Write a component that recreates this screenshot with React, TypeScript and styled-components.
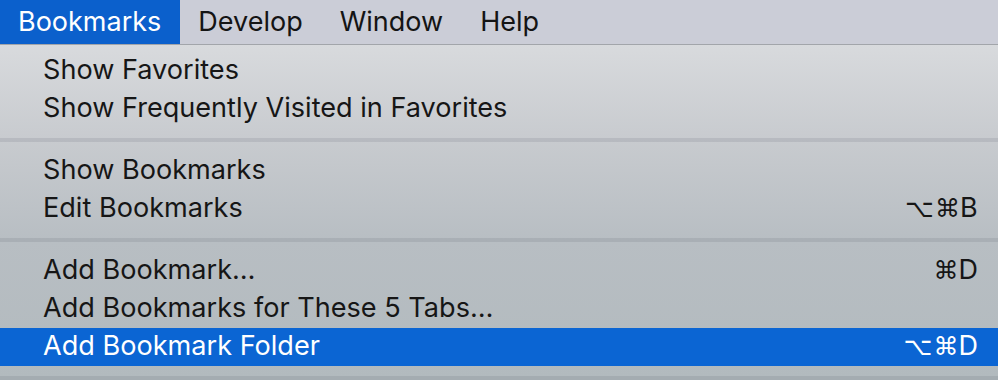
import styled, { createGlobalStyle } from "styled-components";

const GlobalStyle = createGlobalStyle`
  html, body {
    margin: 0;
    padding: 0;
    overflow: hidden;
    background: #b3babe;
  }
  * {
    box-sizing: border-box;
  }
`;

const Screen = styled.div`
  width: 998px;
  height: 380px;
  overflow: hidden;
  font-family: Inter, "Liberation Sans", sans-serif;
  -webkit-font-smoothing: antialiased;
`;

const MenuBar = styled.div`
  display: flex;
  height: 45px;
  background: #cbcdd7;
  border-bottom: 1px solid #a2a5aa;
`;

const MenuTitle = styled.div<{ $active?: boolean }>`
  padding: 0 19px 0 18px;
  line-height: 44px;
  font-size: 27px;
  color: ${(p) => (p.$active ? "#ffffff" : "#141414")};
  background: ${(p) => (p.$active ? "#0b60cc" : "transparent")};
`;

const Dropdown = styled.div`
  background: linear-gradient(
    180deg,
    #d8dadd 0%,
    #c8cbcf 28%,
    #b8bec3 58%,
    #b2babe 100%
  );
`;

const Section = styled.div<{ $first?: boolean }>`
  padding: ${(p) => (p.$first ? "7px" : "10px")} 0 10px;
`;

const Separator = styled.div`
  height: 4px;
  background: rgba(70, 80, 90, 0.13);
`;

const Row = styled.div<{ $selected?: boolean }>`
  display: flex;
  align-items: center;
  justify-content: space-between;
  height: 38px;
  padding: 0 20px 3px 43px;
  font-size: 27.1px;
  color: ${(p) => (p.$selected ? "#ffffff" : "#161616")};
  background: ${(p) => (p.$selected ? "#0b65d3" : "transparent")};
`;

const Shortcut = styled.div`
  display: flex;
  align-items: baseline;
  font-family: "DejaVu Sans", sans-serif;
`;

const ModSlot = styled.span<{ $w: number; $size: number }>`
  flex: 0 0 ${(p) => p.$w}px;
  font-size: ${(p) => p.$size}px;
  overflow: hidden;
`;

const KeySlot = styled.span`
  flex: 0 0 18px;
  font-family: Inter, "Liberation Sans", sans-serif;
  font-size: 27px;
`;

type Item = {
  label: string;
  opt?: boolean;
  cmd?: boolean;
  key?: string;
  selected?: boolean;
};

const sections: Item[][] = [
  [{ label: "Show Favorites" }, { label: "Show Frequently Visited in Favorites" }],
  [
    { label: "Show Bookmarks" },
    { label: "Edit Bookmarks", opt: true, cmd: true, key: "B" },
  ],
  [
    { label: "Add Bookmark…", cmd: true, key: "D" },
    { label: "Add Bookmarks for These 5 Tabs…" },
    { label: "Add Bookmark Folder", opt: true, cmd: true, key: "D", selected: true },
  ],
];

function MenuItem({ item }: { item: Item }) {
  return (
    <Row $selected={item.selected}>
      <span>{item.label}</span>
      {item.key && (
        <Shortcut>
          <ModSlot $w={30} $size={25}>
            {item.opt ? "⌥" : ""}
          </ModSlot>
          <ModSlot $w={25} $size={25}>
            {item.cmd ? "⌘" : ""}
          </ModSlot>
          <KeySlot>{item.key}</KeySlot>
        </Shortcut>
      )}
    </Row>
  );
}

export default function App() {
  return (
    <Screen>
      <GlobalStyle />
      <MenuBar>
        <MenuTitle $active>Bookmarks</MenuTitle>
        <MenuTitle>Develop</MenuTitle>
        <MenuTitle>Window</MenuTitle>
        <MenuTitle>Help</MenuTitle>
      </MenuBar>
      <Dropdown>
        {sections.map((items, i) => (
          <div key={i}>
            <Section $first={i === 0}>
              {items.map((item) => (
                <MenuItem key={item.label} item={item} />
              ))}
            </Section>
            <Separator />
          </div>
        ))}
      </Dropdown>
    </Screen>
  );
}
